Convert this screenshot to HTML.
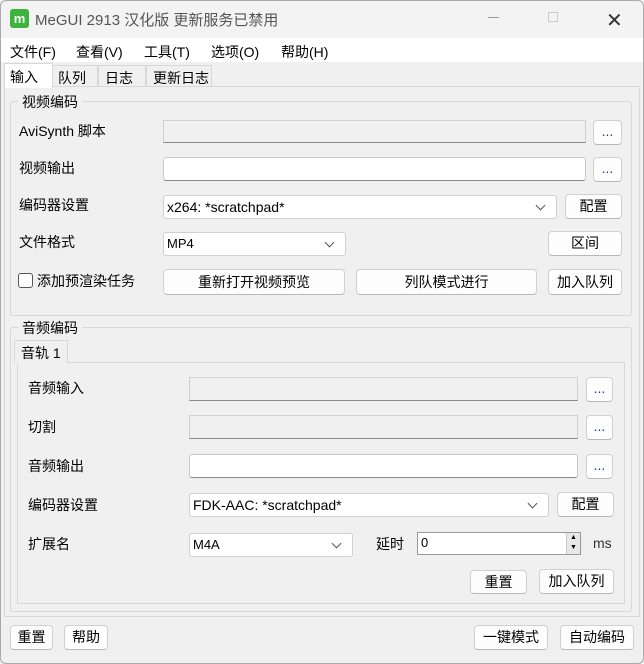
<!DOCTYPE html>
<html><head><meta charset="utf-8"><style>
*{box-sizing:border-box;margin:0;padding:0}
body{width:644px;height:664px;background:#f0f0f0;font-family:"Liberation Sans","Noto Sans CJK SC",sans-serif;font-size:14px;color:#000;position:relative;overflow:hidden}
.a{position:absolute;white-space:nowrap}
.tb{background:#fff;border:1px solid #c8c8c8;border-bottom:1px solid #888;border-radius:3px}
.dis{background:#f0f0f0;border:1px solid #d0d0d0;border-bottom:1px solid #888}
.btn{background:#fdfdfd;border:1px solid #d0d0d0;border-bottom-color:#b8b8b8;border-radius:4px;text-align:center;font-size:14px}
.cb{background:#fff;border:1px solid #d0d0d0;border-radius:3px;font-size:13px;padding-left:3px}
.cb:after{content:"";position:absolute;right:12px;top:6px;width:6px;height:6px;border-right:1px solid #555;border-bottom:1px solid #555;transform:rotate(45deg)}
.grp{border:1px solid #d8d8d8;border-radius:3px}
</style></head><body>
<div class="a" style="left:0;top:0;width:644px;height:38px;background:#f3f3f3"></div>
<div class="a" style="left:10px;top:9px;width:19px;height:19px;background:#3cb33c;border-radius:3px;color:#fff;font-weight:bold;font-size:13px;text-align:center;line-height:19px">m</div>
<div class="a" style="left:35px;top:9px;font-size:15px;color:#555">MeGUI 2913 汉化版 更新服务已禁用</div>
<div class="a" style="left:488px;top:17px;width:11px;height:1px;background:#999"></div>
<div class="a" style="left:548px;top:12px;width:10px;height:10px;border:1px solid #ccc"></div>
<div class="a" style="left:606px;top:8px;font-size:20px;color:#333">✕</div>
<div class="a" style="left:0;top:38px;width:644px;height:24px;background:#fff"></div>
<div class="a" style="left:10px;top:42px">文件(F)</div>
<div class="a" style="left:76px;top:42px">查看(V)</div>
<div class="a" style="left:144px;top:42px">工具(T)</div>
<div class="a" style="left:211px;top:42px">选项(O)</div>
<div class="a" style="left:281px;top:42px">帮助(H)</div>
<div class="a" style="left:4px;top:86px;width:636px;height:531px;border:1px solid #d8d8d8;background:#f0f0f0"></div>
<div class="a" style="left:4px;top:63px;width:49px;height:25px;background:#fff;border:1px solid #d8d8d8;border-bottom:none;padding:3px 0 0 5px">输入</div>
<div class="a" style="left:52px;top:65px;width:46px;height:22px;border:1px solid #d8d8d8;border-bottom:none;padding:2px 0 0 5px">队列</div>
<div class="a" style="left:98px;top:65px;width:48px;height:22px;border:1px solid #d8d8d8;border-bottom:none;padding:2px 0 0 6px">日志</div>
<div class="a" style="left:146px;top:65px;width:66px;height:22px;border:1px solid #d8d8d8;border-bottom:none;padding:2px 0 0 6px">更新日志</div>

<div class="a grp" style="left:10px;top:101px;width:622px;height:215px"></div>
<div class="a" style="left:18px;top:92px;background:#f0f0f0;padding:0 4px">视频编码</div>
<div class="a" style="left:19px;top:121px">AviSynth 脚本</div>
<div class="a dis" style="left:163px;top:120px;width:423px;height:23px"></div>
<div class="a btn" style="left:593px;top:120px;width:29px;height:25px;color:#1a3a9a;line-height:20px">...</div>
<div class="a" style="left:19px;top:158px">视频输出</div>
<div class="a tb" style="left:163px;top:157px;width:423px;height:24px"></div>
<div class="a btn" style="left:593px;top:157px;width:29px;height:25px;color:#1a3a9a;line-height:20px">...</div>
<div class="a" style="left:19px;top:195px">编码器设置</div>
<div class="a cb" style="left:163px;top:195px;width:394px;height:24px;line-height:22px;font-size:14px">x264: *scratchpad*</div>
<div class="a btn" style="left:565px;top:194px;width:57px;height:25px;line-height:23px">配置</div>
<div class="a" style="left:19px;top:232px">文件格式</div>
<div class="a cb" style="left:163px;top:232px;width:183px;height:24px;line-height:22px">MP4</div>
<div class="a btn" style="left:548px;top:231px;width:74px;height:25px;line-height:23px">区间</div>
<div class="a" style="left:18px;top:273px;width:15px;height:15px;border:1px solid #555;border-radius:3px;background:#fff"></div>
<div class="a" style="left:37px;top:271px">添加预渲染任务</div>
<div class="a btn" style="left:163px;top:269px;width:182px;height:26px;line-height:24px">重新打开视频预览</div>
<div class="a btn" style="left:356px;top:269px;width:181px;height:26px;line-height:24px">列队模式进行</div>
<div class="a btn" style="left:548px;top:269px;width:74px;height:26px;line-height:24px">加入队列</div>

<div class="a grp" style="left:10px;top:327px;width:622px;height:285px"></div>
<div class="a" style="left:18px;top:318px;background:#f0f0f0;padding:0 4px">音频编码</div>
<div class="a" style="left:17px;top:362px;width:608px;height:242px;border:1px solid #d8d8d8;background:#f0f0f0"></div>
<div class="a" style="left:14px;top:340px;width:54px;height:23px;background:#f0f0f0;border:1px solid #d8d8d8;border-bottom:none;padding:2px 0 0 6px">音轨 1</div>
<div class="a" style="left:28px;top:378px">音频输入</div>
<div class="a dis" style="left:189px;top:377px;width:389px;height:24px"></div>
<div class="a btn" style="left:586px;top:377px;width:27px;height:25px;color:#1a3a9a;line-height:20px">...</div>
<div class="a" style="left:28px;top:417px">切割</div>
<div class="a dis" style="left:189px;top:415px;width:389px;height:24px"></div>
<div class="a btn" style="left:586px;top:415px;width:27px;height:25px;color:#1a3a9a;line-height:20px">...</div>
<div class="a" style="left:28px;top:456px">音频输出</div>
<div class="a tb" style="left:189px;top:454px;width:389px;height:24px"></div>
<div class="a btn" style="left:586px;top:454px;width:27px;height:25px;color:#1a3a9a;line-height:20px">...</div>
<div class="a" style="left:28px;top:495px">编码器设置</div>
<div class="a cb" style="left:189px;top:493px;width:360px;height:24px;line-height:22px;font-size:14px">FDK-AAC: *scratchpad*</div>
<div class="a btn" style="left:557px;top:492px;width:57px;height:25px;line-height:23px">配置</div>
<div class="a" style="left:28px;top:534px">扩展名</div>
<div class="a cb" style="left:189px;top:533px;width:164px;height:24px;line-height:22px">M4A</div>
<div class="a" style="left:376px;top:534px">延时</div>
<div class="a" style="left:417px;top:532px;width:164px;height:23px;background:#fff;border:1px solid #999;font-size:13px;padding:2px 0 0 3px">0</div>
<div class="a" style="left:566px;top:533px;width:14px;height:21px;background:#e8e8e8;border-left:1px solid #ccc;font-size:7px;line-height:10px;text-align:center">▲<br>▼</div>
<div class="a" style="left:593px;top:535px;color:#333">ms</div>
<div class="a btn" style="left:470px;top:570px;width:57px;height:24px;line-height:22px">重置</div>
<div class="a btn" style="left:539px;top:569px;width:75px;height:25px;line-height:23px">加入队列</div>

<div class="a btn" style="left:10px;top:625px;width:43px;height:25px;line-height:23px">重置</div>
<div class="a btn" style="left:64px;top:625px;width:44px;height:25px;line-height:23px">帮助</div>
<div class="a btn" style="left:474px;top:625px;width:74px;height:25px;line-height:23px">一键模式</div>
<div class="a btn" style="left:560px;top:625px;width:74px;height:25px;line-height:23px">自动编码</div>
<div class="a" style="left:0;top:0;width:644px;height:664px;border:1px solid #aaa;border-radius:6px;pointer-events:none"></div>
</body></html>
